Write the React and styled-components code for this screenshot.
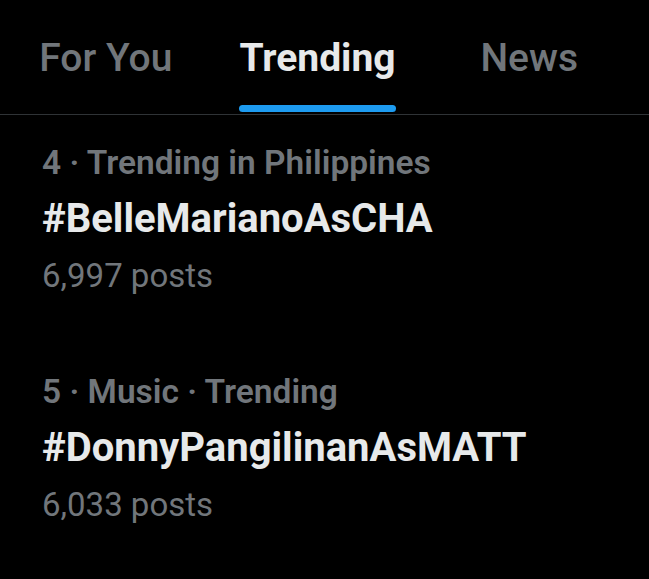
import styled, { createGlobalStyle } from 'styled-components';

const GlobalStyle = createGlobalStyle`
  html, body {
    margin: 0;
    padding: 0;
    background: #000;
  }
  body {
    font-family: Roboto, "Liberation Sans", sans-serif;
    color: #e7e9ea;
  }
`;

const Page = styled.div`
  width: 649px;
  height: 579px;
  background: #000;
  overflow: hidden;
`;

const TabBar = styled.nav`
  display: flex;
  height: 114px;
  padding-right: 14px;
  border-bottom: 1px solid #2f3336;
`;

const Tab = styled.div`
  flex: 1;
  display: flex;
  justify-content: center;
  align-items: flex-end;
`;

const TabInner = styled.div`
  display: flex;
  flex-direction: column;
  align-items: stretch;
`;

const TabLabel = styled.span`
  font-size: 39px;
  line-height: 48px;
  font-weight: ${(p) => (p.$active ? 700 : 500)};
  color: ${(p) => (p.$active ? '#e7e9ea' : '#71767b')};
  text-align: center;
  margin-bottom: ${(p) => (p.$active ? '23px' : '32px')};
`;

const Underline = styled.div`
  height: 7px;
  border-radius: 4px;
  background: #1d9bf0;
  margin-bottom: 2px;
`;

const TrendItem = styled.div`
  display: flex;
  flex-direction: column;
  padding: 28px 42px 44px;
`;

const Meta = styled.div`
  font-size: 33.5px;
  line-height: 40px;
  font-weight: 600;
  color: #71767b;
`;

const Hashtag = styled.div`
  font-size: 40px;
  line-height: 56px;
  font-weight: 700;
  color: #e7e9ea;
  margin-top: 8px;
`;

const Posts = styled.div`
  font-size: 33px;
  line-height: 48px;
  color: #71767b;
  margin-top: 5px;
`;

const tabs = ['For You', 'Trending', 'News'];

const trends = [
  { meta: '4 · Trending in Philippines', tag: '#BelleMarianoAsCHA', posts: '6,997 posts' },
  { meta: '5 · Music · Trending', tag: '#DonnyPangilinanAsMATT', posts: '6,033 posts' },
];

export default function App() {
  return (
    <Page>
      <GlobalStyle />
      <TabBar>
        {tabs.map((t) => (
          <Tab key={t}>
            <TabInner>
              <TabLabel $active={t === 'Trending'}>{t}</TabLabel>
              {t === 'Trending' && <Underline />}
            </TabInner>
          </Tab>
        ))}
      </TabBar>
      {trends.map((tr) => (
        <TrendItem key={tr.tag}>
          <Meta>{tr.meta}</Meta>
          <Hashtag>{tr.tag}</Hashtag>
          <Posts>{tr.posts}</Posts>
        </TrendItem>
      ))}
    </Page>
  );
}
